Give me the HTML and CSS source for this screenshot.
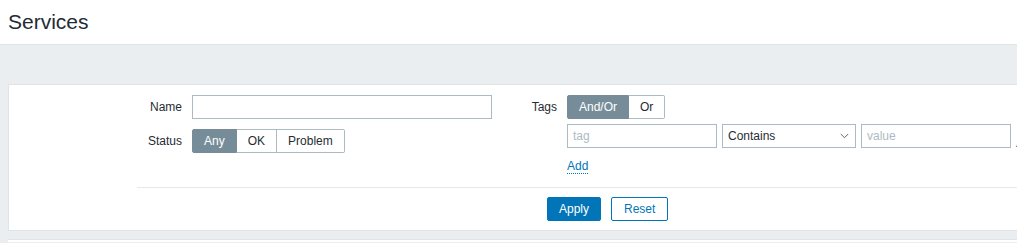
FILE: index.html
```html
<!DOCTYPE html>
<html>
<head>
<meta charset="utf-8">
<link rel="stylesheet" href="styles.css">
<title>Services</title>
</head>
<body>
<header class="header">
  <h1 class="title">Services</h1>
</header>
<main class="content">
  <section class="filter">
    <div class="filter-body">
      <div class="col col-left">
        <label class="lbl">Name</label>
        <div class="ctrl"><input class="input input-name" type="text"></div>
        <label class="lbl">Status</label>
        <div class="ctrl">
          <div class="seg">
            <span class="seg-item is-on">Any</span>
            <span class="seg-item">OK</span>
            <span class="seg-item">Problem</span>
          </div>
        </div>
      </div>
      <div class="col col-right">
        <label class="lbl">Tags</label>
        <div class="ctrl">
          <div class="seg">
            <span class="seg-item is-on">And/Or</span>
            <span class="seg-item">Or</span>
          </div>
          <div class="tag-row">
            <input class="input input-tag" type="text" placeholder="tag">
            <div class="select">
              <span>Contains</span>
              <svg class="chev" width="9" height="6" viewBox="0 0 9 6"><path d="M0.8 1 L4.5 4.7 L8.2 1" fill="none" stroke="#5a6870" stroke-width="1"/></svg>
            </div>
            <input class="input input-tag" type="text" placeholder="value">
            <span class="cut">.</span>
          </div>
          <a class="link add">Add</a>
        </div>
      </div>
    </div>
    <div class="filter-footer">
      <button class="btn btn-primary">Apply</button>
      <button class="btn btn-alt">Reset</button>
    </div>
  </section>
  <section class="next-box"></section>
</main>
</body>
</html>
```

FILE: styles.css
```css
html, body {
  margin: 0;
  padding: 0;
}
body {
  background: #ebeef0;
  font-family: "Liberation Sans", Arial, sans-serif;
  font-size: 12px;
  line-height: 14px;
  color: #1f2c33;
  overflow: hidden;
  width: 1017px;
  height: 243px;
}
.header {
  background: #fff;
  height: 44px;
  border-bottom: 1px solid #dfe4e7;
  box-sizing: content-box;
}
.title {
  margin: 0;
  padding: 10px 0 0 8px;
  font-size: 21px;
  line-height: 24px;
  font-weight: normal;
  color: #1f2c33;
}
.content {
  padding: 39px 0 0 8px;
}
.filter {
  background: #fff;
  border: 1px solid #dfe4e7;
  border-right: none;
  overflow: hidden;
}
.filter-body {
  display: flex;
  padding: 10px 0 17px 0;
  height: 75px;
}
.col {
  display: grid;
  grid-template-columns: 45px auto;
  column-gap: 10px;
  row-gap: 10px;
  align-content: start;
  flex-shrink: 0;
}
.col-left {
  margin-left: 128px;
}
.col-right {
  margin-left: 20px;
}
.lbl {
  text-align: right;
  height: 24px;
  line-height: 24px;
  white-space: nowrap;
}
.ctrl {
  display: flex;
  flex-direction: column;
  align-items: flex-start;
}
.input {
  box-sizing: border-box;
  height: 24px;
  border: 1px solid #acbbc2;
  background: #fff;
  font-family: inherit;
  font-size: 12px;
  color: #1f2c33;
  padding: 0 5px;
  margin: 0;
  outline: none;
  border-radius: 0;
}
.input::placeholder {
  color: #acbbc2;
}
.input-name {
  width: 300px;
}
.input-tag {
  width: 150px;
}
.seg {
  display: flex;
  height: 24px;
}
.seg-item {
  box-sizing: border-box;
  height: 24px;
  line-height: 22px;
  padding: 0 11px;
  border: 1px solid #acbbc2;
  background: #fff;
  color: #1f2c33;
  white-space: nowrap;
}
.seg-item + .seg-item {
  border-left: none;
}
.seg-item:first-child {
  border-radius: 2px 0 0 2px;
}
.seg-item:last-child {
  border-radius: 0 2px 2px 0;
}
.seg-item.is-on {
  background: #768d99;
  border-color: #768d99;
  color: #fff;
}
.tag-row {
  display: flex;
  align-items: center;
  gap: 5px;
  margin-top: 5px;
  white-space: nowrap;
}
.select {
  box-sizing: border-box;
  width: 134px;
  height: 24px;
  border: 1px solid #acbbc2;
  display: flex;
  align-items: center;
  justify-content: space-between;
  padding: 0 6px 0 5px;
  color: #1f2c33;
  white-space: nowrap;
  flex-shrink: 0;
}
.input-tag {
  flex-shrink: 0;
}
.chev {
  display: block;
}
.cut {
  color: #0275b8;
  margin-left: -1px;
  align-self: flex-end;
  line-height: 10px;
}
.link {
  color: #0275b8;
  text-decoration: none;
  border-bottom: 1px dotted #0275b8;
  cursor: pointer;
}
.add {
  margin-top: 11px;
  line-height: 14px;
}
.filter-footer {
  margin-left: 128px;
  border-top: 1px solid #e5e9ec;
  padding: 9px 0 9px 410px;
  display: flex;
  gap: 10px;
}
.btn {
  box-sizing: border-box;
  height: 24px;
  padding: 0 11px;
  font-family: inherit;
  font-size: 12px;
  line-height: 22px;
  border-radius: 2px;
  margin: 0;
  cursor: pointer;
}
.btn-primary {
  background: #0275b8;
  border: 1px solid #0275b8;
  color: #fff;
}
.btn-alt {
  background: #fff;
  border: 1px solid #0275b8;
  color: #0275b8;
  padding: 0 12px;
}
.next-box {
  margin-top: 8px;
  background: #fff;
  border-top: 1px solid #dfe4e7;
  height: 2px;
}
```
